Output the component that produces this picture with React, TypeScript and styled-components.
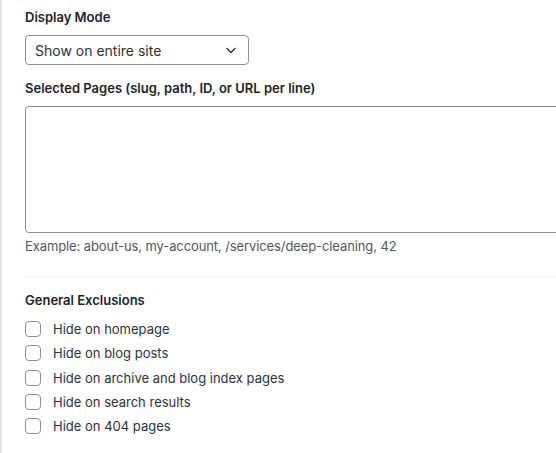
import React from "react";
import styled, { createGlobalStyle } from "styled-components";

const GlobalStyle = createGlobalStyle`
  html, body {
    margin: 0;
    padding: 0;
    background: #fff;
    overflow: hidden;
  }
  body {
    font-family: Inter, "Liberation Sans", Arial, sans-serif;
    color: #1d2327;
  }
`;

const Panel = styled.div`
  width: 620px;
  height: 453px;
  box-sizing: border-box;
  border-left: 2px solid #e2e4e7;
  padding: 9px 0 0 23px;
`;

const Field = styled.div`
  display: flex;
  flex-direction: column;
`;

const Label = styled.div`
  font-size: 13px;
  font-weight: 600;
  line-height: 16px;
  color: #1d2327;
  margin-bottom: 10px;
`;

const SelectBox = styled.div`
  width: 224px;
  height: 30px;
  box-sizing: border-box;
  border: 1px solid #8c8f94;
  border-radius: 4px;
  display: flex;
  align-items: center;
  justify-content: space-between;
  padding: 0 10px 0 9px;
  font-size: 14px;
  color: #2c3338;
  margin-bottom: 15px;
`;

const TextArea = styled.div`
  height: 127px;
  box-sizing: border-box;
  border: 1px solid #8c8f94;
  border-radius: 4px;
  margin-bottom: 5px;
`;

const Help = styled.div`
  font-size: 13px;
  line-height: 16px;
  color: #50575e;
  letter-spacing: -0.1px;
`;

const Divider = styled.hr`
  border: 0;
  border-top: 1px solid #f0f0f1;
  margin: 22px 0 15px;
`;

const CheckList = styled.div`
  display: flex;
  flex-direction: column;
  gap: 8.3px;
  margin-top: 3px;
`;

const CheckRow = styled.label`
  display: flex;
  align-items: center;
  gap: 12px;
  font-size: 13px;
  line-height: 16px;
  color: #2c3338;
`;

const Box = styled.span`
  width: 16px;
  height: 16px;
  box-sizing: border-box;
  border: 1px solid #8c8f94;
  border-radius: 4px;
  flex-shrink: 0;
`;

const Chevron = () => (
  <svg width="14" height="14" viewBox="0 0 14 14" fill="none">
    <path d="M2.5 5 L7 9.5 L11.5 5" stroke="#2c3338" strokeWidth="1.4" />
  </svg>
);

const exclusions = [
  "Hide on homepage",
  "Hide on blog posts",
  "Hide on archive and blog index pages",
  "Hide on search results",
  "Hide on 404 pages",
];

const App = () => {
  return (
    <>
      <GlobalStyle />
      <Panel>
        <Field>
          <Label>Display Mode</Label>
          <SelectBox>
            <span>Show on entire site</span>
            <Chevron />
          </SelectBox>
        </Field>
        <Field>
          <Label>Selected Pages (slug, path, ID, or URL per line)</Label>
          <TextArea />
          <Help>Example: about-us, my-account, /services/deep-cleaning, 42</Help>
        </Field>
        <Divider />
        <Field>
          <Label>General Exclusions</Label>
          <CheckList>
            {exclusions.map(text => (
              <CheckRow key={text}>
                <Box />
                {text}
              </CheckRow>
            ))}
          </CheckList>
        </Field>
      </Panel>
    </>
  );
};

export default App;
